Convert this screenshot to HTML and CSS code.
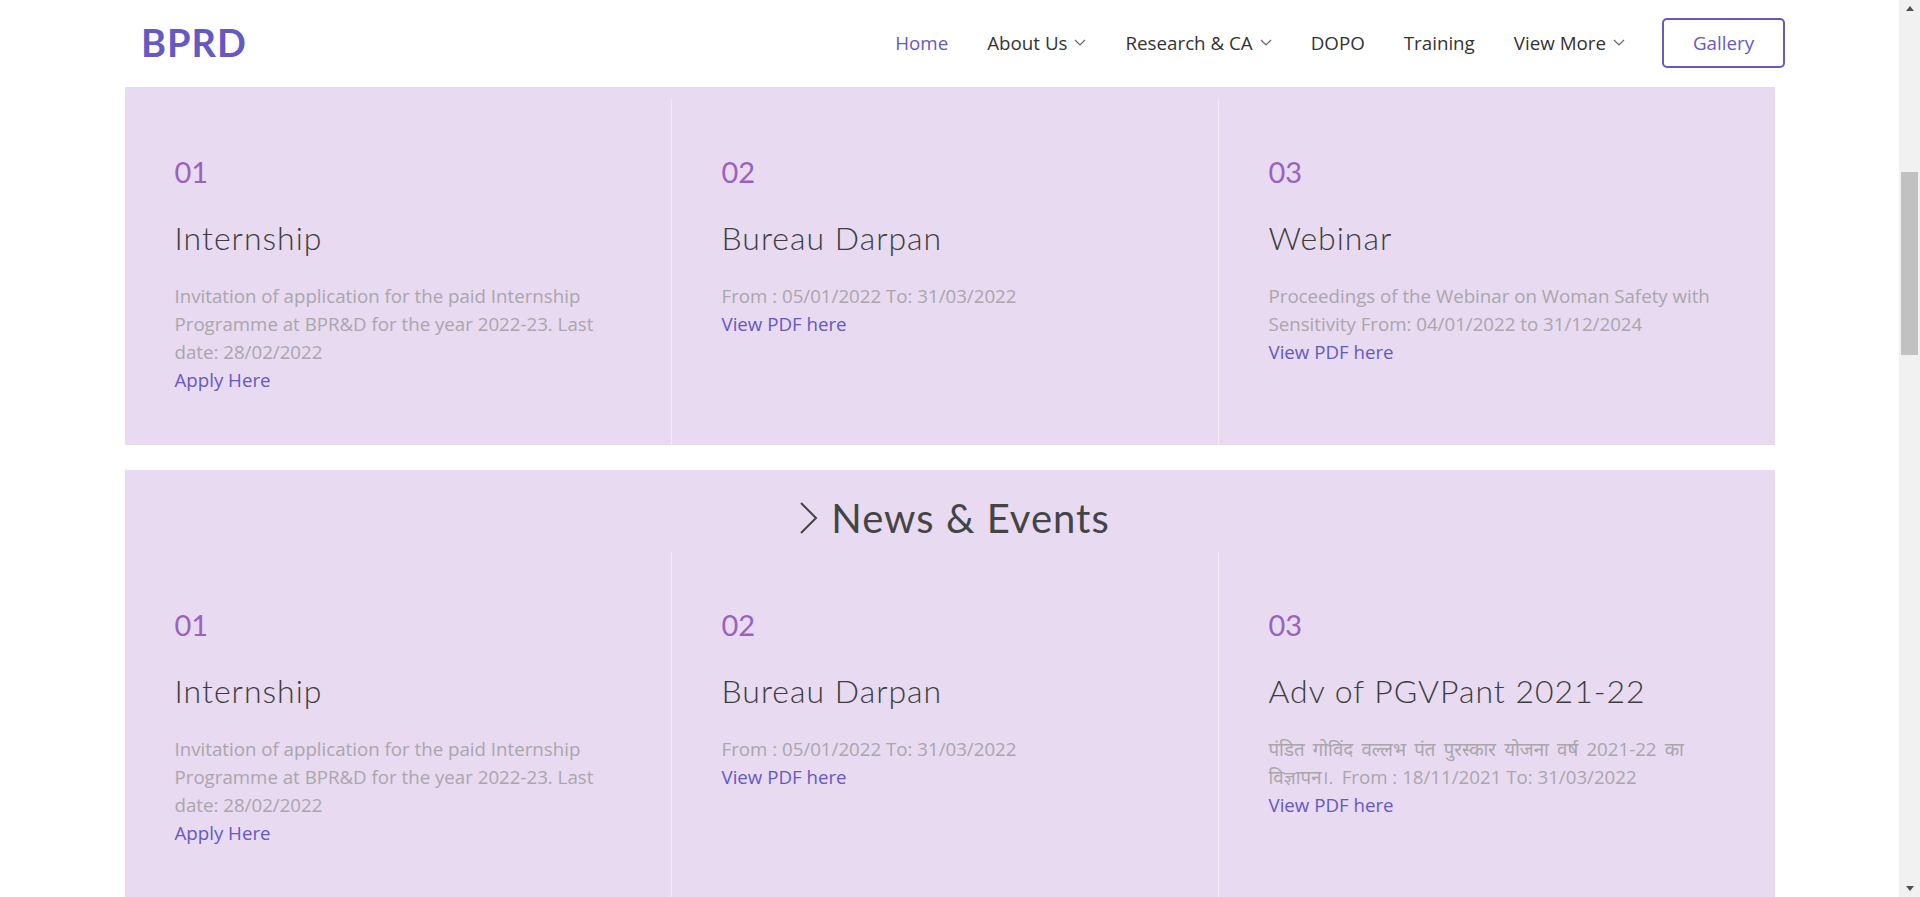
FILE: index.html
```html
<!DOCTYPE html>
<html lang="en">
<head>
<meta charset="utf-8">
<title>BPRD</title>
<link rel="stylesheet" href="styles.css">
</head>
<body>
<div class="viewport">
  <div class="page">
    <header class="topbar">
      <a class="logo" href="#">BPRD</a>
      <nav class="nav">
        <a class="nav-item active" href="#">Home</a>
        <a class="nav-item" href="#">About Us<svg class="caret" viewBox="0 0 12 7"><polyline points="1,1 6,6 11,1"/></svg></a>
        <a class="nav-item" href="#">Research &amp; CA<svg class="caret" viewBox="0 0 12 7"><polyline points="1,1 6,6 11,1"/></svg></a>
        <a class="nav-item" href="#">DOPO</a>
        <a class="nav-item" href="#">Training</a>
        <a class="nav-item" href="#">View More<svg class="caret" viewBox="0 0 12 7"><polyline points="1,1 6,6 11,1"/></svg></a>
        <a class="btn-gallery" href="#">Gallery</a>
      </nav>
    </header>

    <main class="content">
      <section class="panel panel-cut">
        <div class="cols">
          <div class="col">
            <div class="num">01</div>
            <h3 class="title">Internship</h3>
            <p class="text">Invitation of application for the paid Internship Programme at BPR&amp;D for the year 2022-23. Last date: 28/02/2022<a class="link" href="#">Apply Here</a></p>
          </div>
          <div class="col">
            <div class="num">02</div>
            <h3 class="title">Bureau Darpan</h3>
            <p class="text">From : 05/01/2022 To: 31/03/2022<a class="link" href="#">View PDF here</a></p>
          </div>
          <div class="col">
            <div class="num">03</div>
            <h3 class="title">Webinar</h3>
            <p class="text">Proceedings of the Webinar on Woman Safety with Sensitivity From: 04/01/2022 to 31/12/2024<a class="link" href="#">View PDF here</a></p>
          </div>
        </div>
      </section>

      <section class="panel">
        <h2 class="panel-title"><svg class="chev" viewBox="0 0 20 34"><polyline points="2,2 17,17 2,32"/></svg>News &amp; Events</h2>
        <div class="cols">
          <div class="col">
            <div class="num">01</div>
            <h3 class="title">Internship</h3>
            <p class="text">Invitation of application for the paid Internship Programme at BPR&amp;D for the year 2022-23. Last date: 28/02/2022<a class="link" href="#">Apply Here</a></p>
          </div>
          <div class="col">
            <div class="num">02</div>
            <h3 class="title">Bureau Darpan</h3>
            <p class="text">From : 05/01/2022 To: 31/03/2022<a class="link" href="#">View PDF here</a></p>
          </div>
          <div class="col">
            <div class="num">03</div>
            <h3 class="title">Adv of PGVPant 2021-22</h3>
            <p class="text text-hi" lang="hi">पंडित गोविंद वल्लभ पंत पुरस्कार योजना वर्ष 2021-22 का विज्ञापन।. <span lang="en">From : 18/11/2021 To: 31/03/2022</span><a class="link" href="#" lang="en">View PDF here</a></p>
          </div>
        </div>
      </section>
    </main>
  </div>

  <div class="scrollbar">
    <div class="sb-arrow"><span class="tri-up"></span></div>
    <div class="sb-track"><div class="sb-thumb"></div></div>
    <div class="sb-arrow"><span class="tri-down"></span></div>
  </div>
</div>
</body>
</html>
```

FILE: styles.css
```css
* { box-sizing: border-box; }

html, body {
  margin: 0;
  padding: 0;
  height: 100%;
  overflow: hidden;
  background: #ffffff;
  font-family: "Open Sans", "Noto Sans", "Noto Sans Devanagari", sans-serif;
}

.viewport {
  display: flex;
  height: 100vh;
}

.page {
  flex: 1;
  min-width: 0;
  overflow: hidden;
  display: flex;
  flex-direction: column;
}

/* Header */
.topbar {
  height: 87px;
  flex: 0 0 87px;
  background: #ffffff;
  display: flex;
  align-items: center;
  justify-content: space-between;
  padding: 0 114px 2px 141px;
}

.logo {
  font-family: "Lato", "Open Sans", sans-serif;
  font-weight: 700;
  font-size: 38px;
  letter-spacing: 1px;
  color: #6659bf;
  text-decoration: none;
  margin-top: -2px;
}

.nav {
  display: flex;
  align-items: center;
  gap: 39px;
}

.nav-item {
  font-size: 18.75px;
  color: #333333;
  text-decoration: none;
  display: flex;
  align-items: center;
}

.nav-item.active { color: #6659bf; }

.caret {
  width: 12px;
  height: 7px;
  margin-left: 7px;
  fill: none;
  stroke: #666666;
  stroke-width: 1.2;
}

.btn-gallery {
  width: 123px;
  height: 50px;
  border: 2px solid #6659bf;
  border-radius: 5px;
  display: flex;
  align-items: center;
  justify-content: center;
  font-size: 18.75px;
  color: #6659bf;
  text-decoration: none;
  margin-left: -2px;
}

/* Content */
.content {
  flex: 1;
}

.panel {
  width: 1650px;
  margin: 25px auto 0;
  background: #e7daf1;
}

.panel-cut {
  margin-top: 0;
  padding-top: 12px;
}

.panel-title {
  margin: 0;
  padding: 23px 0 9px 10px;
  line-height: 50px;
  height: 82px;
  font-family: "Lato", "Open Sans", sans-serif;
  font-weight: 400;
  font-size: 40px;
  letter-spacing: 1px;
  color: #444444;
  display: flex;
  justify-content: center;
  align-items: center;
}

.chev {
  width: 20px;
  height: 34px;
  margin-right: 12px;
  fill: none;
  stroke: #444444;
  stroke-width: 2;
}

.cols {
  display: grid;
  grid-template-columns: 546px 547px 557px;
}

.col {
  padding: 53px 50px 51px 50px;
}

.col + .col {
  border-left: 1px solid #f2ebf7;
}

.num {
  font-family: "Lato", "Open Sans", sans-serif;
  font-size: 29px;
  line-height: 40px;
  color: #9b62bd;
}

.title {
  margin: 26px 0 0;
  font-family: "Lato", "Open Sans", sans-serif;
  font-weight: 300;
  font-size: 32px;
  letter-spacing: 1px;
  line-height: 40px;
  color: #3d3d3d;
}

.text {
  margin: 24px 0 0;
  font-size: 18.7px;
  line-height: 28px;
  color: #aaa6ac;
}

.text-hi {
  word-spacing: 3.3px;
}

.text-hi span,
.text-hi .link {
  word-spacing: normal;
}

.link {
  display: block;
  color: #6659bf;
  text-decoration: none;
}

/* Scrollbar */
.scrollbar {
  width: 21px;
  flex: 0 0 21px;
  background: #f1f1f1;
  display: flex;
  flex-direction: column;
}

.sb-arrow {
  height: 17px;
  display: flex;
  align-items: center;
  justify-content: center;
}

.tri-up {
  width: 0;
  height: 0;
  border-left: 4.5px solid transparent;
  border-right: 4.5px solid transparent;
  border-bottom: 5px solid #505050;
}

.tri-down {
  width: 0;
  height: 0;
  border-left: 4.5px solid transparent;
  border-right: 4.5px solid transparent;
  border-top: 5px solid #505050;
}

.sb-track {
  flex: 1;
  padding: 0 2px;
}

.sb-thumb {
  margin-top: 155px;
  height: 183px;
  background: #c1c1c1;
}
```
